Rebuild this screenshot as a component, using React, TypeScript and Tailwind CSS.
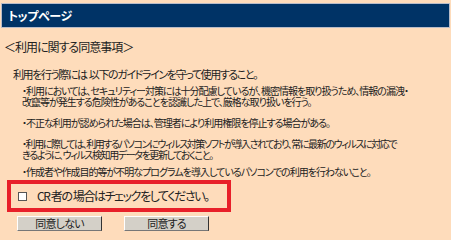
import React from "react";

const jp = "font-['Noto_Sans_CJK_JP','Noto_Sans',sans-serif] [font-feature-settings:'palt']";

export default function App() {
  return (
    <div className={`w-[451px] h-[240px] bg-[#fedcbb] text-[#222] overflow-hidden whitespace-nowrap ${jp}`}>
      <div className="pt-[3px] px-[1px]">
        <div className="h-[25px] bg-[#003366] border border-[#b9bcc8] flex items-center pl-[6px] text-white font-bold text-[12px] tracking-[-0.4px] leading-none">
          トップページ
        </div>
      </div>
      <div className="mt-[12px] pl-[4px] text-[12px] tracking-[-1px] leading-[14px]">＜利用に関する同意事項＞</div>
      <div className="mt-[13px] pl-[13px] text-[11px] tracking-[-1.4px] leading-[14px]">
        利用を行う際には&nbsp; 以下のガイドラインを守って使用すること。
      </div>
      <div className="mt-[4px] pl-[22px] text-[10px] tracking-[-1px] leading-[11px] flex flex-col">
        <p>
          ・利用においては、セキュリティー対策には十分配慮しているが、機密情報を取り扱うため、情報の漏洩・
          <br />
          改竄等が発生する危険性があることを認識した上で、厳格な取り扱いを行う。
        </p>
        <p className="mt-[10px]">・不正な利用が認められた場合は、管理者により利用権限を停止する場合がある。</p>
        <p className="mt-[10px] tracking-[-1.4px]">
          ・利用に際しては、利用するパソコンにウィルス対策ソフトが導入されており、常に最新のウィルスに対応で
          <br />
          きるように、ウィルス検知用データを更新しておくこと。
        </p>
        <p className="mt-[6px]">・作成者や作成目的等が不明なプログラムを導入しているパソコンでの利用を行わないこと。</p>
      </div>
      <div className="mt-[3px] ml-[7px] w-[224px] h-[32px] border-4 border-[#e8202a] flex items-center pl-[7px]">
        <span className="w-[9px] h-[9px] border border-[#555] bg-white shrink-0" />
        <span className="ml-[10px] text-[12px] tracking-[-1.4px] leading-none">CR&nbsp;者の&nbsp;場合はチェックをしてください。</span>
      </div>
      <div className="mt-[4px] flex gap-[22px] pl-[17px]">
        <button className="w-[85px] h-[15px] bg-[#d4d0c8] border border-t-white border-l-white border-r-[#333] border-b-[#777] text-[11px] tracking-[-0.8px] leading-none flex items-center justify-center">
          同意しない
        </button>
        <button className="w-[85px] h-[15px] bg-[#d4d0c8] border border-t-white border-l-white border-r-[#333] border-b-[#777] text-[11px] tracking-[-0.8px] leading-none flex items-center justify-center">
          同意する
        </button>
      </div>
    </div>
  );
}
